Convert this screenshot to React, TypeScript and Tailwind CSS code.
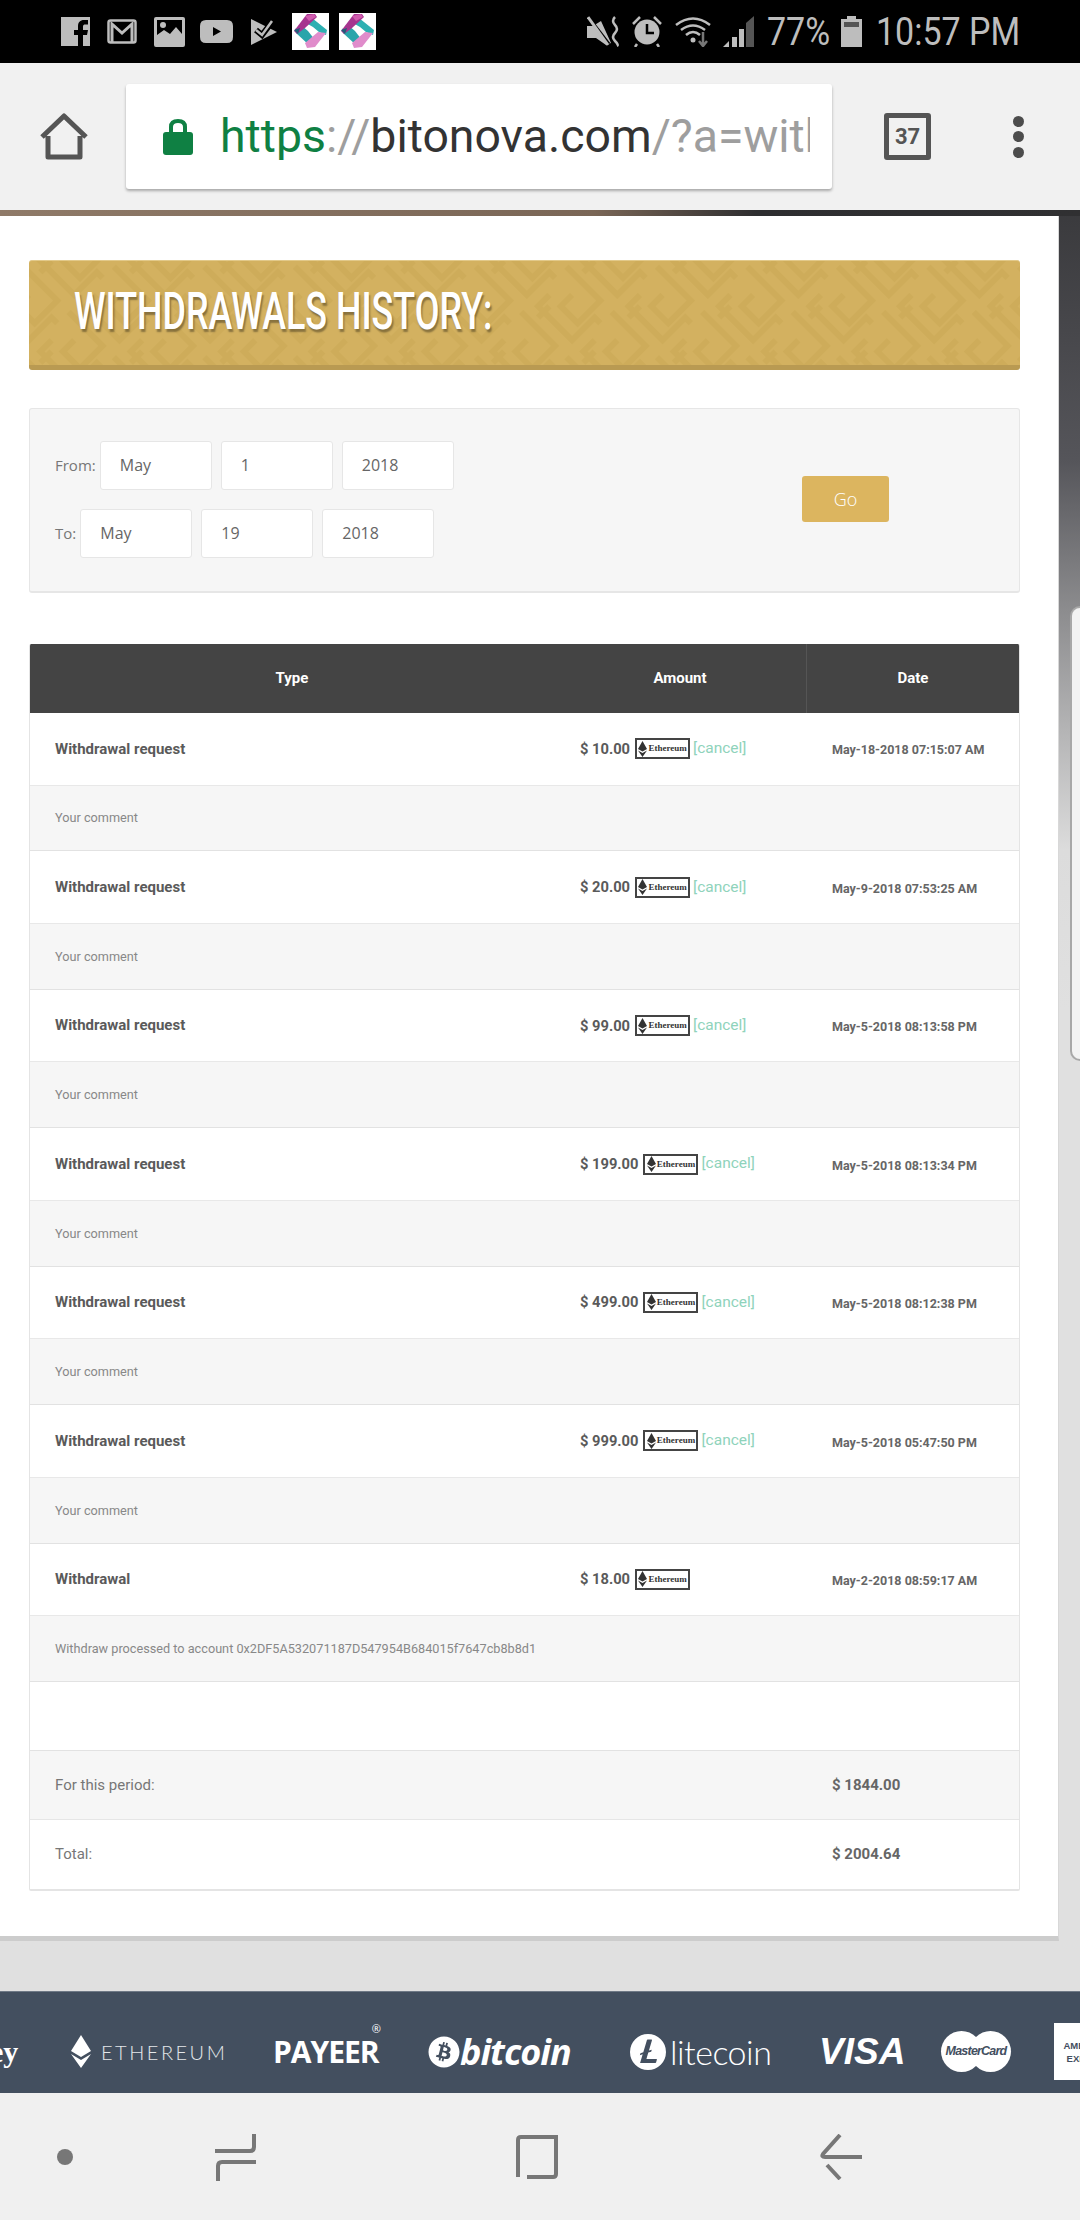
import { FaBitcoin } from "react-icons/fa";
import { SiLitecoin } from "react-icons/si";

const rows = [
  { title: "Withdrawal request", amount: "$ 10.00", date: "May-18-2018 07:15:07 AM", note: "Your comment", cancel: true },
  { title: "Withdrawal request", amount: "$ 20.00", date: "May-9-2018 07:53:25 AM", note: "Your comment", cancel: true },
  { title: "Withdrawal request", amount: "$ 99.00", date: "May-5-2018 08:13:58 PM", note: "Your comment", cancel: true },
  { title: "Withdrawal request", amount: "$ 199.00", date: "May-5-2018 08:13:34 PM", note: "Your comment", cancel: true },
  { title: "Withdrawal request", amount: "$ 499.00", date: "May-5-2018 08:12:38 PM", note: "Your comment", cancel: true },
  { title: "Withdrawal request", amount: "$ 999.00", date: "May-5-2018 05:47:50 PM", note: "Your comment", cancel: true },
  {
    title: "Withdrawal",
    amount: "$ 18.00",
    date: "May-2-2018 08:59:17 AM",
    note: "Withdraw processed to account 0x2DF5A532071187D547954B684015f7647cb8b8d1",
    cancel: false,
  },
];

function RibbonLogo() {
  return (
    <svg width="37" height="37" viewBox="0 0 37 37" className="shrink-0">
      <rect width="37" height="37" fill="#fff" />
      <polygon points="14,10 20,5 35,17 34,22 27,19 21,14" fill="#2db0b2" />
      <polygon points="3,16 10,13 16,18 23,27 17,32 4,20" fill="#2aa5aa" />
      <polygon points="15,1 23,1 25,4 13,15 5,21 2,18" fill="#a6348f" />
      <polygon points="13,3 22,1 24,4 17,8" fill="#d05cae" />
      <polygon points="34,20 23,34 15,35 13,30 26,19" fill="#e08ccb" />
      <polygon points="2,17 8,15 6,21" fill="#1f5f7a" />
    </svg>
  );
}

function StatusBar() {
  return (
    <div className="flex h-[63px] shrink-0 items-center bg-black text-[#bdbdbd]">
      <svg width="29" height="29" viewBox="0 0 29 29" className="ml-[61px] shrink-0">
        <path fill="#bdbdbd" d="M0 0H29V29H22V18H26L27 13H22V9.500C22 8 23 7.500 24 7.500H27V3H23C19 3 17 5.500 17 9V13H13V18H17V29H0Z" />
      </svg>
      <svg width="30" height="25" viewBox="0 0 30 25" className="ml-[17px] shrink-0">
        <rect x="1.500" y="1.500" width="27" height="22" rx="2" fill="none" stroke="#bdbdbd" strokeWidth="2.500" />
        <path d="M5 23V5L15 14L25 5V23" fill="none" stroke="#bdbdbd" strokeWidth="3" />
      </svg>
      <svg width="31" height="30" viewBox="0 0 31 30" className="ml-[17px] shrink-0">
        <path fill="#bdbdbd" fillRule="evenodd" d="M2 0H29Q31 0 31 2V28Q31 30 29 30H2Q0 30 0 28V2Q0 0 2 0ZM3 3V18L10 13L16 17L22 10L28 17V3Z" />
        <circle cx="9" cy="8" r="3" fill="#bdbdbd" />
      </svg>
      <svg width="33" height="23" viewBox="0 0 33 23" className="ml-[15px] shrink-0">
        <path fill="#bdbdbd" fillRule="evenodd" d="M6 0H27Q33 0 33 6V17Q33 23 27 23H6Q0 23 0 17V6Q0 0 6 0ZM13 7V16L21 11.500Z" />
      </svg>
      <svg width="26" height="27" viewBox="0 0 26 27" className="ml-[18px] shrink-0">
        <polygon points="0,1 26,14 0,27" fill="#bdbdbd" />
        <path d="M5 12L11 17L21 4" fill="none" stroke="#000" strokeWidth="6" />
        <path d="M5 12L11 17L21 3" fill="none" stroke="#bdbdbd" strokeWidth="2.500" />
      </svg>
      <div className="ml-[15px] shrink-0">
        <RibbonLogo />
      </div>
      <div className="ml-[10px] shrink-0">
        <RibbonLogo />
      </div>

      <svg width="34" height="31" viewBox="0 0 34 31" className="ml-[211px] shrink-0">
        <path fill="#bdbdbd" d="M0 10H6L14 5L24 27L19 29L9 22H0Z" />
        <path d="M2 2L22 28" stroke="#000" strokeWidth="3" />
        <path d="M1 1L21 29" stroke="#bdbdbd" strokeWidth="3" />
        <path d="M28 1Q24 5 28 9T28 17T28 25T30 30" fill="none" stroke="#bdbdbd" strokeWidth="2.500" />
      </svg>
      <svg width="30" height="31" viewBox="0 0 30 31" className="ml-[11px] shrink-0">
        <circle cx="15" cy="16" r="12.500" fill="#bdbdbd" />
        <path d="M15 8V17H22" fill="none" stroke="#000" strokeWidth="2.500" />
        <path d="M1 8L8 1M29 8L22 1M5 28L3 31M25 28L27 31" stroke="#bdbdbd" strokeWidth="2.500" />
      </svg>
      <svg width="36" height="31" viewBox="0 0 36 31" className="ml-[13px] shrink-0">
        <path d="M1 9Q18 -4 35 9M6 14Q18 5 30 14M11 19Q18 13 25 19" fill="none" stroke="#bdbdbd" strokeWidth="2.500" />
        <circle cx="18" cy="24" r="2.500" fill="#bdbdbd" />
        <path d="M28 16V29M24 25L28 30L32 25" fill="none" stroke="#777" strokeWidth="2.500" />
      </svg>
      <svg width="31" height="31" viewBox="0 0 31 31" className="ml-[12px] shrink-0">
        <polygon points="0,31 6,25 6,31" fill="#bdbdbd" />
        <rect x="9" y="21" width="5" height="10" fill="#bdbdbd" />
        <rect x="16" y="13" width="5" height="18" fill="#bdbdbd" />
        <polygon points="23,7 31,0 31,31 23,31" fill="#555" />
      </svg>
      <span className="ml-[13px] w-[60px] shrink-0 scale-y-[1.12] font-['Roboto',sans-serif] text-[34px] leading-none">77%</span>
      <svg width="21" height="31" viewBox="0 0 21 31" className="ml-[14px] shrink-0">
        <path fill="#bdbdbd" d="M6 0H15V3H21V31H0V3H6Z" />
        <rect x="3" y="6" width="15" height="5" fill="#555" />
      </svg>
      <span className="ml-[14px] shrink-0 scale-y-[1.12] font-['Roboto',sans-serif] text-[34px] leading-none">10:57 PM</span>
    </div>
  );
}

function Toolbar() {
  return (
    <div className="flex h-[147px] shrink-0 items-center bg-[#f1f1f1]">
      <svg width="48" height="47" viewBox="0 0 48 47" className="ml-[40px] shrink-0">
        <path d="M8 23V44H40V23M2 24L24 3L46 24" fill="none" stroke="#555" strokeWidth="5" strokeLinejoin="round" />
      </svg>
      <div className="ml-[38px] flex h-[105px] w-[706px] shrink-0 items-center rounded-[3px] bg-white pl-[37px] shadow-[0_2px_3px_rgba(0,0,0,0.3)]">
        <svg width="30" height="37" viewBox="0 0 30 37" className="shrink-0">
          <path d="M8 16V9Q8 3 15 3Q22 3 22 9V16" fill="none" stroke="#0f8043" strokeWidth="4" />
          <rect y="14" width="30" height="23" rx="3" fill="#0f8043" />
        </svg>
        <div className="ml-[27px] w-[590px] overflow-hidden whitespace-nowrap font-['Roboto',sans-serif] text-[46.400px] leading-none text-[#9e9e9e]">
          <span className="text-[#0f8043]">https</span>://
          <span className="text-[#333]">bitonova.com</span>/?a=with
        </div>
      </div>
      <div className="ml-[52px] flex h-[47px] w-[47px] shrink-0 items-center justify-center rounded-[3px] border-[5px] border-[#555] font-['Roboto',sans-serif] text-[22px] font-bold text-[#555]">
        37
      </div>
      <div className="ml-[82px] flex shrink-0 flex-col gap-[4.500px]">
        <span className="h-[11px] w-[11px] rounded-full bg-[#4c4c4c]" />
        <span className="h-[11px] w-[11px] rounded-full bg-[#4c4c4c]" />
        <span className="h-[11px] w-[11px] rounded-full bg-[#4c4c4c]" />
      </div>
    </div>
  );
}

function DateField({ value, gap }: { value: string; gap?: boolean }) {
  return (
    <div
      className={`flex h-[49px] w-[112px] items-center rounded-[3px] border border-[#e6e6e6] bg-white pl-[19px] text-[16px] text-[#666] ${
        gap ? "ml-[9px]" : ""
      }`}
    >
      {value}
    </div>
  );
}

function DateRow({ label, day }: { label: string; day: string }) {
  return (
    <div className="flex items-center">
      <span className="mr-[4px] text-[15px] font-normal text-[#777]">{label}</span>
      <DateField value="May" />
      <DateField value={day} gap />
      <DateField value="2018" gap />
    </div>
  );
}

function EthereumBadge() {
  return (
    <span className="ml-[5px] inline-flex h-[21px] w-[55px] shrink-0 items-center justify-center gap-[1px] border-2 border-[#444] bg-white">
      <svg width="9" height="16" viewBox="0 0 9 16" className="shrink-0">
        <path fill="#333" d="M4.500 0L9 8L4.500 10.500L0 8ZM0 9.500L4.500 12L9 9.500L4.500 16Z" />
      </svg>
      <span className="font-['Liberation_Serif',serif] text-[9px] leading-none font-bold text-[#333]">Ethereum</span>
    </span>
  );
}

function HistoryRow({ row }: { row: (typeof rows)[number] }) {
  return (
    <>
      <div className="grid h-[72.600px] grid-cols-[524px_252px_1fr] items-center border-b border-[#e8e8e8] bg-white">
        <div className="pl-[25px] text-[15px] font-bold text-[#5a5a5a]">{row.title}</div>
        <div className="flex items-center pl-[26px]">
          <span className="text-[14.700px] font-bold text-[#5a5a5a]">{row.amount}</span>
          <EthereumBadge />
          {row.cancel && <span className="ml-[3px] text-[15.500px] text-[#8fd3bb]">[cancel]</span>}
        </div>
        <div className="pt-[4px] pl-[26px] text-[12.500px] font-bold whitespace-nowrap text-[#666]">{row.date}</div>
      </div>
      <div className="flex h-[65.830px] items-center border-b border-[#e2e2e2] bg-[#f6f6f6] pl-[25px] text-[12.700px] text-[#888]">
        {row.note}
      </div>
    </>
  );
}

function HistoryTable() {
  return (
    <div className="mt-[51px] overflow-hidden rounded-[2px] border border-t-0 border-b-2 border-[#e4e4e4] font-['Roboto',sans-serif]">
      <div className="grid h-[69px] grid-cols-[524px_252px_1fr] items-center bg-[#444] text-center text-[15px] font-bold text-white">
        <div>Type</div>
        <div>Amount</div>
        <div className="flex h-full items-center justify-center border-l border-[#555]">Date</div>
      </div>
      {rows.map((row) => (
        <HistoryRow key={row.date} row={row} />
      ))}
      <div className="h-[69px] border-b border-[#e2e2e2] bg-white" />
      <div className="grid h-[69px] grid-cols-[776px_1fr] items-center border-b border-[#e6e6e6] bg-[#f6f6f6] text-[15px]">
        <div className="pl-[25px] text-[#777]">For this period:</div>
        <div className="pl-[26px] font-bold text-[#666]">$ 1844.00</div>
      </div>
      <div className="grid h-[69px] grid-cols-[776px_1fr] items-center bg-white text-[15px]">
        <div className="pl-[25px] text-[#777]">Total:</div>
        <div className="pl-[26px] font-bold text-[#666]">$ 2004.64</div>
      </div>
    </div>
  );
}

function Banner() {
  return (
    <div className="relative flex h-[110px] items-center overflow-hidden rounded-[3px] border-t border-b-[5px] border-t-[#e2c98a] border-b-[#b99a52] bg-[#d3b160] pb-[2px] pl-[45px]">
      <svg className="absolute inset-0 h-full w-full" aria-hidden="true">
        <defs>
          <pattern id="fret" width="64" height="64" patternUnits="userSpaceOnUse" patternTransform="rotate(45)">
            <path
              d="M0 8H48V40H24V24M64 24H56V56H8V40M16 64V48"
              fill="none"
              stroke="#c9a653"
              strokeWidth="6"
              strokeOpacity="0.45"
            />
          </pattern>
        </defs>
        <rect width="100%" height="100%" fill="url(#fret)" />
      </svg>
      <h1 className="relative inline-block origin-left scale-x-[0.69] font-['Roboto',sans-serif] text-[52px] leading-none font-medium whitespace-nowrap text-white [text-shadow:2px_3px_2px_rgba(0,0,0,0.35)]">
        WITHDRAWALS HISTORY:
      </h1>
    </div>
  );
}

function FilterPanel() {
  return (
    <div className="mt-[38px] flex h-[185px] items-center rounded-[3px] border border-b-2 border-[#e6e6e6] bg-[#f6f6f6] pb-[2px] pl-[25px] font-['Open_Sans',sans-serif]">
      <div className="flex flex-col gap-[19px]">
        <DateRow label="From:" day="1" />
        <DateRow label="To:" day="19" />
      </div>
      <button className="mr-[130px] ml-auto flex h-[46px] w-[87px] items-center justify-center rounded-[3px] bg-[#dcb55f] text-[18px] font-light text-white">
        Go
      </button>
    </div>
  );
}

function PaymentLogos() {
  return (
    <div className="flex h-[102px] shrink-0 items-center overflow-hidden border-t border-[#6f7986] bg-[#434f5f] pt-[18px] text-white">
      <span className="-ml-[10px] w-[28px] shrink-0 font-['Liberation_Serif',serif] text-[30px] leading-none font-bold">ey</span>
      <svg width="20" height="33" viewBox="0 0 20 33" className="ml-[53px] shrink-0">
        <path fill="#fff" d="M10 0L20 16L10 22L0 16ZM0 19L10 25L20 19L10 33Z" />
      </svg>
      <span className="ml-[10px] w-[121px] shrink-0 font-['Lato',sans-serif] text-[20px] font-light tracking-[2.500px] text-[#e4e7ea]">ETHEREUM</span>
      <span className="relative ml-[51px] w-[107px] shrink-0 font-['Open_Sans',sans-serif] text-[30px] leading-none font-bold tracking-[-1px]">
        PAYEER
        <span className="absolute -top-[14px] right-0 text-[11px] font-normal">®</span>
      </span>
      <FaBitcoin className="ml-[48px] shrink-0 text-[32px]" />
      <span className="w-[112px] shrink-0 font-['Open_Sans',sans-serif] text-[36px] leading-none font-bold tracking-[-1px] italic">bitcoin</span>
      <SiLitecoin className="ml-[58px] shrink-0 text-[36px]" />
      <span className="ml-[4px] w-[100px] shrink-0 font-['Lato',sans-serif] text-[34px] leading-none font-light tracking-[-0.500px]">litecoin</span>
      <span className="ml-[49px] w-[84px] shrink-0 font-['Liberation_Sans',sans-serif] text-[37px] leading-none font-bold italic">VISA</span>
      <div className="relative ml-[38px] flex h-[41px] w-[70px] shrink-0 items-center justify-center">
        <span className="absolute left-0 h-[41px] w-[41px] rounded-full bg-white" />
        <span className="absolute right-0 h-[41px] w-[41px] rounded-full bg-white" />
        <span className="relative font-['Liberation_Sans',sans-serif] text-[12.500px] font-bold tracking-[-0.800px] whitespace-nowrap text-[#434f5f] italic">
          MasterCard
        </span>
      </div>
      <div className="ml-[43px] flex h-[57px] w-[70px] shrink-0 flex-col items-center justify-center bg-white font-['Liberation_Sans',sans-serif] text-[9.500px] leading-[13px] font-bold text-[#434f5f]">
        <span>AMERICAN</span>
        <span>EXPRESS</span>
      </div>
    </div>
  );
}

function NavBar() {
  return (
    <div className="flex flex-1 items-center bg-[#f0f0f0] pt-[1px]">
      <span className="ml-[57px] h-[16px] w-[16px] shrink-0 rounded-full bg-[#777]" />
      <svg width="42" height="47" viewBox="0 0 42 47" className="ml-[142px] shrink-0">
        <path d="M39 0V13Q39 17 35 17H0M41 28H7Q3 28 3 32V47" fill="none" stroke="#777" strokeWidth="4" />
      </svg>
      <svg width="42" height="44" viewBox="0 0 42 44" className="ml-[259px] shrink-0">
        <path d="M42 2H5Q2 2 2 5V42M11 42H37Q40 42 40 39V4" fill="none" stroke="#777" strokeWidth="4" />
      </svg>
      <svg width="42" height="46" viewBox="0 0 42 46" className="ml-[262px] shrink-0">
        <path d="M20 1L3 20Q1 23 5 23H42M7 31L20 45" fill="none" stroke="#777" strokeWidth="4" />
      </svg>
    </div>
  );
}

export default function App() {
  return (
    <div className="flex h-[2220px] w-[1080px] flex-col overflow-hidden">
      <StatusBar />
      <Toolbar />
      <main className="flex flex-1 flex-col bg-[linear-gradient(180deg,#3a3a3d_0px,#55555a_250px,#8c8c8e_400px,#dcdcdc_640px,#e0e0e0_800px)]">
        <div className="h-[6px] bg-[linear-gradient(90deg,#8f7a68_0%,#7a6656_55%,#2e2e30_70%,#303032_100%)]" />
        <div className="flex">
          <div className="h-[1725px] w-[1059px] shrink-0 border-r border-b-[5px] border-r-[#d8d8d8] border-b-[#cccccc] bg-white pt-[44px] pr-[38px] pl-[29px]">
            <Banner />
            <FilterPanel />
            <HistoryTable />
          </div>
          <div className="mt-[390px] ml-[11px] h-[455px] flex-1 rounded-l-[14px] border-2 border-r-0 border-[#a8a8a8] bg-[#f3f3f3]" />
        </div>
      </main>
      <PaymentLogos />
      <div className="flex h-[127px] shrink-0">
        <NavBar />
      </div>
    </div>
  );
}
